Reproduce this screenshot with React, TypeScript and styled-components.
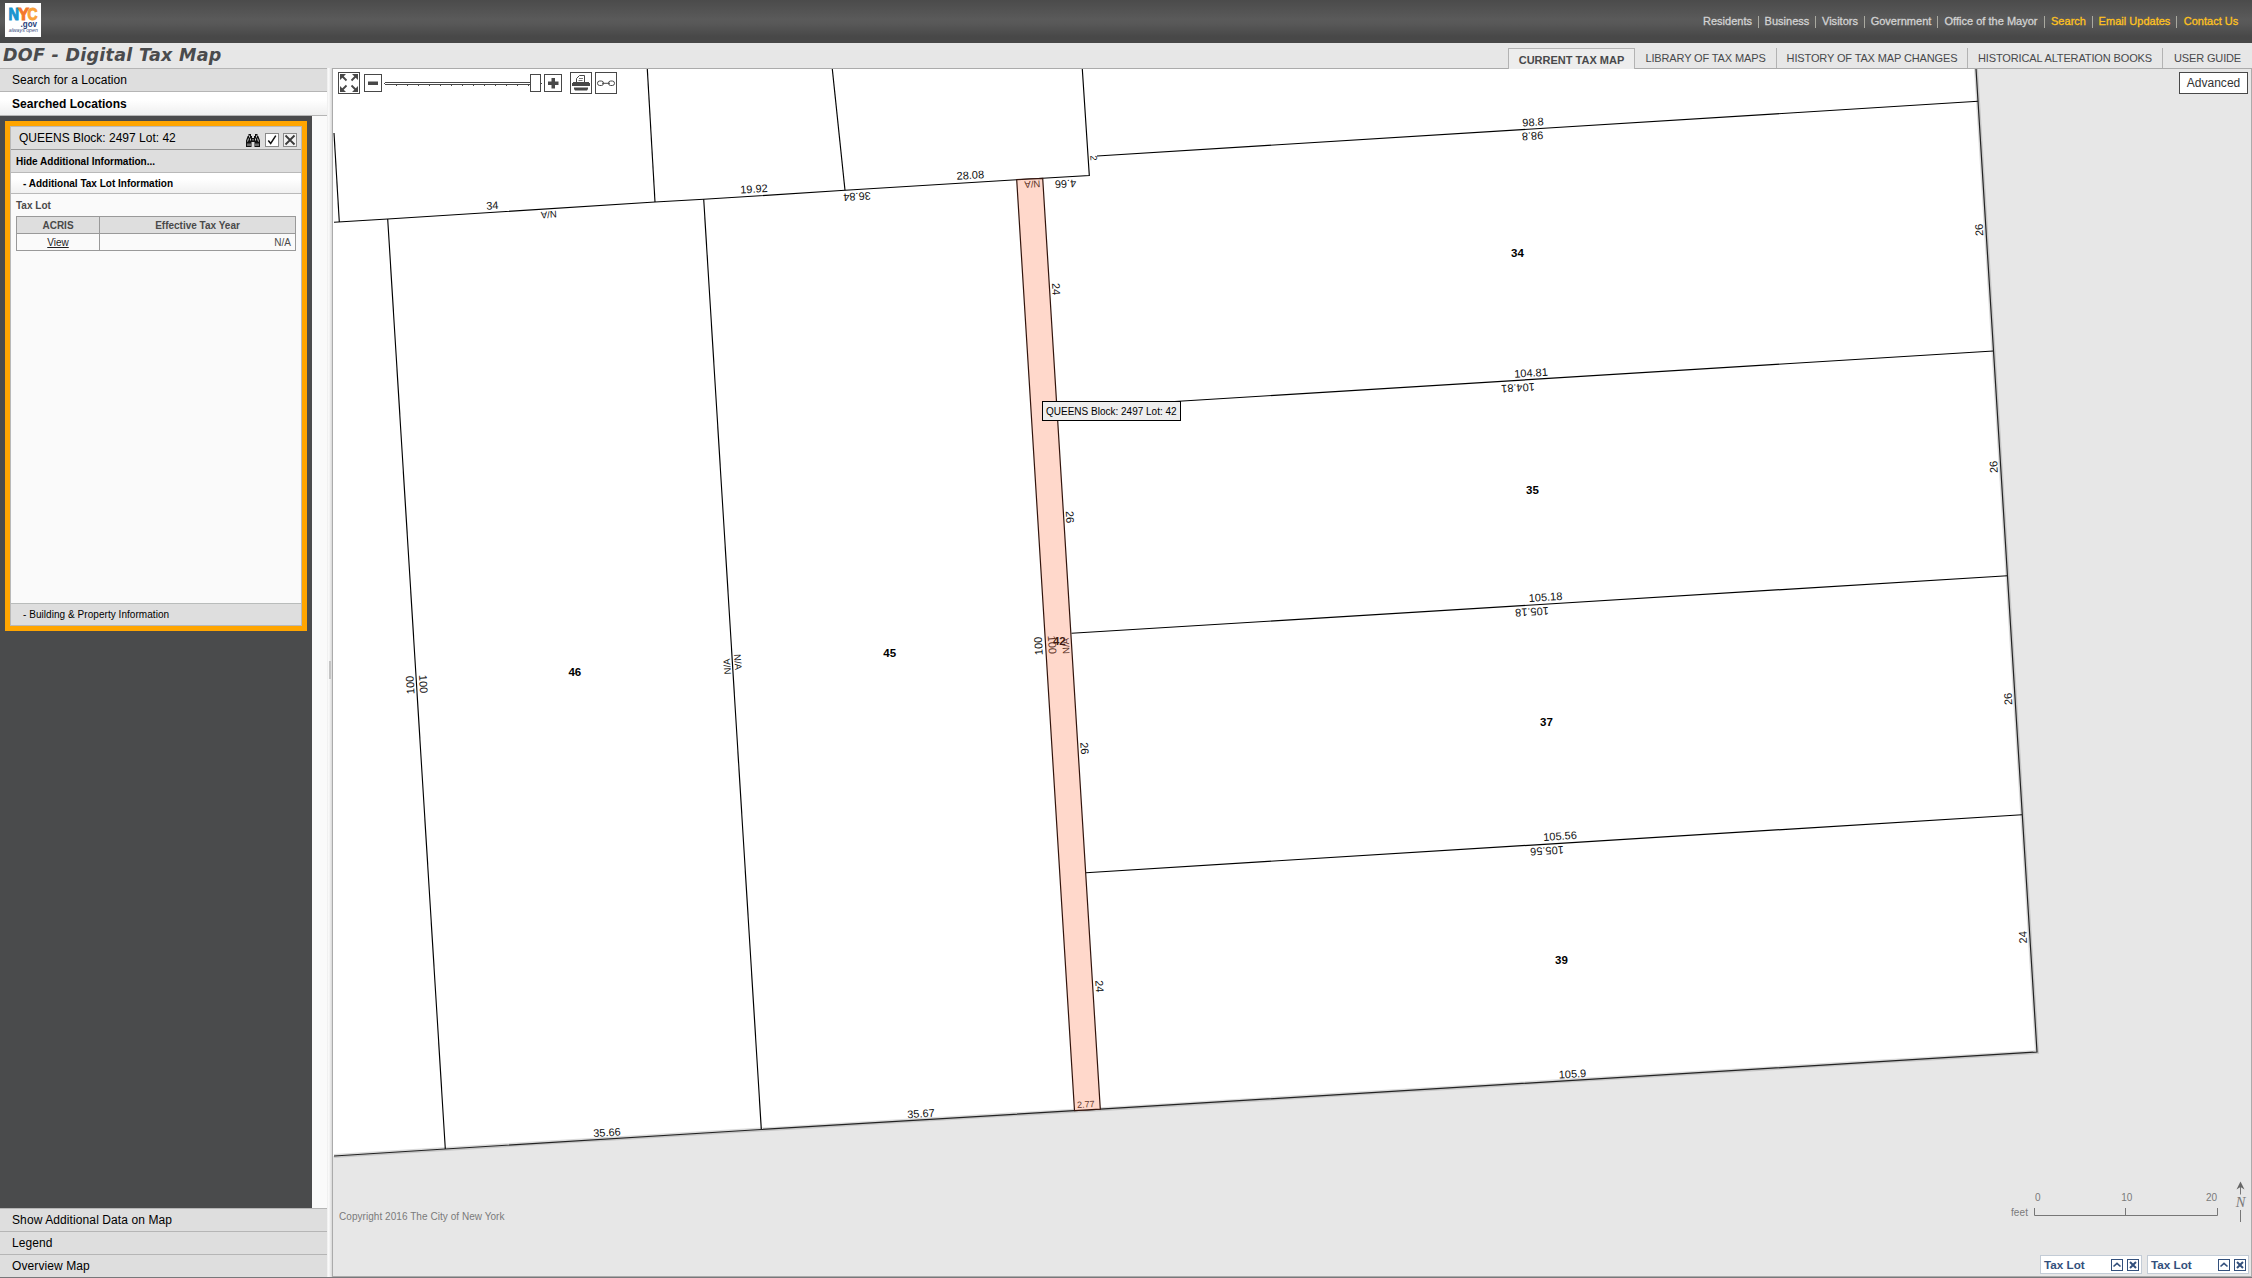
import React from "react";
import styled, { createGlobalStyle, css } from "styled-components";

const Global = createGlobalStyle`
  *, *::before, *::after { box-sizing: border-box; }
  html, body { margin: 0; padding: 0; overflow: hidden; background: #e7e7e7; }
  body { font-family: "Liberation Sans", Arial, Helvetica, sans-serif; }
`;

const Page = styled.div`
  width: 2252px;
  height: 1278px;
  display: flex;
  flex-direction: column;
  background: #e7e7e7;
  border-bottom: 1px solid #77777a;
`;

/* ---------- top banner ---------- */
const Banner = styled.header`
  height: 43px;
  flex: none;
  display: flex;
  justify-content: space-between;
  align-items: flex-start;
  padding: 3px 7px 0 5px;
  background: linear-gradient(#4b4b4b 0%, #5a5a5a 45%, #585858 55%, #484848 85%, #484848 100%);
`;

const BannerNav = styled.nav`
  display: flex;
  align-items: center;
  height: 37px;
`;

const NavLink = styled.a<{ $w: number; $hot?: boolean }>`
  width: ${(p) => p.$w}px;
  height: 12px;
  display: flex;
  align-items: center;
  justify-content: center;
  white-space: nowrap;
  font-size: 11px;
  line-height: 10px;
  padding-bottom: 1px;
  letter-spacing: 0.02px;
  color: ${(p) => (p.$hot ? "#ffc220" : "#d2d2d2")};
  -webkit-text-stroke: 0.3px currentColor;
  & + & { border-left: 1px solid #a9a9a0; }
`;

/* ---------- title and tabs ---------- */
const TitleBar = styled.div`
  height: 25px;
  flex: none;
  display: flex;
  justify-content: space-between;
  align-items: flex-start;
  background: #e7e7e7;
`;

const Title = styled.h1`
  margin: 0;
  padding-left: 3px;
  font: italic bold 17.5px/25px "DejaVu Sans", Verdana, sans-serif;
  letter-spacing: 0.27px;
  color: #4a4b4d;
  white-space: nowrap;
`;

const Tabs = styled.div`
  display: flex;
  padding-top: 5px;
`;

const Tab = styled.div<{ $w: number; $active?: boolean; $last?: boolean }>`
  width: ${(p) => p.$w}px;
  height: 20px;
  display: flex;
  align-items: center;
  justify-content: center;
  white-space: nowrap;
  font-size: 11px;
  letter-spacing: -0.13px;
  color: #48494b;
  border-right: ${(p) => (p.$last ? "none" : "1px solid #b3b3b3")};
  ${(p) =>
    p.$active &&
    css`
      height: 21px;
      position: relative;
      z-index: 1;
      padding-top: 1px;
      letter-spacing: 0;
      font-weight: bold;
      background: #ededed;
      border: 1px solid #b3b3b3;
      border-bottom: none;
    `}
`;

/* ---------- main split ---------- */
const Main = styled.div`
  flex: 1;
  min-height: 0;
  display: flex;
`;

const Sidebar = styled.aside`
  width: 327px;
  flex: none;
  display: flex;
  flex-direction: column;
  border-top: 1px solid #b5b5b5;
`;

const SideRow = styled.div<{ $open?: boolean; $h: number }>`
  height: ${(p) => p.$h}px;
  flex: none;
  display: flex;
  align-items: center;
  padding-left: 12px;
  font-size: 12px;
  letter-spacing: 0.04px;
  color: #000;
  font-weight: ${(p) => (p.$open ? "bold" : "normal")};
  background: ${(p) => (p.$open ? "linear-gradient(#ffffff 35%, #efefef)" : "#dedede")};
  border-bottom: 1px solid #b5b5b5;
`;

const BottomRow = styled(SideRow)`
  border-bottom: none;
  border-top: 1px solid #b5b5b5;
  letter-spacing: 0.1px;
`;

const SideBody = styled.div`
  flex: 1;
  min-height: 0;
  display: flex;
  background: #fafafa;
`;

const Dark = styled.div`
  width: 312px;
  padding: 5px;
  background: #4a4b4c;
`;

const Card = styled.section`
  width: 302px;
  height: 510px;
  border: 5px solid #ffa500;
  display: flex;
`;

const CardInner = styled.div`
  flex: 1;
  display: flex;
  flex-direction: column;
  border: 1px solid #b9b9b9;
  background: #fafafa;
`;

const CardHead = styled.div`
  height: 23px;
  flex: none;
  display: flex;
  align-items: center;
  padding: 0 4px 0 8px;
  gap: 4px;
  background: #dedede;
  border-bottom: 1px solid #999;
  font-size: 12px;
  svg { display: block; margin-top: 4px; }
  span { flex: 1; padding-bottom: 1px; }
`;

const CardBar = styled.div<{ $h: number; $pad: number; $bold?: boolean; $light?: boolean }>`
  height: ${(p) => p.$h}px;
  flex: none;
  display: flex;
  align-items: center;
  padding-left: ${(p) => p.$pad}px;
  font-size: 10px;
  white-space: pre;
  font-weight: ${(p) => (p.$bold ? "bold" : "normal")};
  background: ${(p) => (p.$light ? "linear-gradient(#ffffff 30%, #f0f0f0)" : "#dedede")};
  border-bottom: 1px solid #b9b9b9;
`;

const CardFoot = styled(CardBar)`
  border-bottom: none;
  border-top: 1px solid #b9bcbb;
  letter-spacing: 0.05px;
`;

const CardBody = styled.div`
  flex: 1;
  padding: 6px 5px 0;
  font-size: 10px;
  color: #4a4a4a;
`;

const Caption = styled.div`
  height: 16px;
  line-height: 12px;
  font-weight: bold;
`;

const Table = styled.div`
  display: grid;
  grid-template-columns: 82px 1fr;
  grid-auto-rows: 16px;
  gap: 1px;
  padding: 1px;
  width: 280px;
  background: #999;
`;

const Cell = styled.div<{ $head?: boolean; $right?: boolean }>`
  display: flex;
  align-items: center;
  justify-content: ${(p) => (p.$right ? "flex-end" : "center")};
  padding: 1px ${(p) => (p.$right ? 4 : 0)}px 0 0;
  background: ${(p) => (p.$head ? "#dedede" : "#fafafa")};
  font-weight: ${(p) => (p.$head ? "bold" : "normal")};
`;

const Link = styled.a`
  color: #222;
  text-decoration: underline;
`;

const Splitter = styled.div`
  width: 5px;
  flex: none;
  display: flex;
  align-items: center;
  justify-content: center;
  padding-bottom: 5px;
  background: linear-gradient(90deg, #ececec, #fbfbfb 35%, #d8d8d8);
  &::after {
    content: "";
    width: 2px;
    height: 18px;
    border: 1px solid #c4c4c4;
  }
`;

/* ---------- map ---------- */
const MapPane = styled.main`
  flex: 1;
  position: relative;
  overflow: hidden;
  background: #e7e7e7;
  border: 1px solid #ababab;
`;

const MapSvg = styled.svg`
  display: block;
`;

const Toolbar = styled.div`
  position: absolute;
  left: 5px;
  top: 3px;
  height: 22px;
  display: flex;
  align-items: center;
`;

const ToolButton = styled.button<{ $s: number; $ml?: number }>`
  width: ${(p) => p.$s}px;
  height: ${(p) => p.$s}px;
  margin: 0 0 0 ${(p) => p.$ml || 0}px;
  padding: 0;
  display: flex;
  align-items: center;
  justify-content: center;
  border: 1px solid #484848;
  background: #fff;
  svg { display: block; }
`;

const Advanced = styled.button`
  position: absolute;
  right: 3px;
  top: 3px;
  width: 69px;
  height: 22px;
  padding: 0;
  font: 12px "Liberation Sans", Arial, sans-serif;
  letter-spacing: 0.04px;
  color: #333;
  background: #fff;
  border: 1px solid #484848;
`;

const Tooltip = styled.div`
  position: absolute;
  left: 709px;
  top: 332px;
  width: 139px;
  height: 20px;
  padding-left: 3px;
  font-size: 10px;
  line-height: 19px;
  color: #000;
  white-space: nowrap;
  background: #eee;
  border: 1px solid #000;
`;

const Copyright = styled.div`
  position: absolute;
  left: 6px;
  bottom: 53px;
  font-size: 10px;
  line-height: 12px;
  letter-spacing: 0.05px;
  color: #7a7a7a;
`;

const ScaleBox = styled.svg`
  position: absolute;
  right: 0;
  bottom: 46px;
`;

const Dock = styled.div`
  position: absolute;
  right: 2px;
  bottom: 2px;
  display: flex;
  gap: 5px;
`;

const DockItem = styled.div`
  width: 102px;
  height: 19px;
  display: flex;
  align-items: center;
  gap: 4px;
  padding: 0 2px 0 3px;
  background: #fff;
  border: 1px solid #c3ccd6;
  color: #33507c;
  font-size: 11.7px;
  font-weight: bold;
  span { flex: 1; }
  svg { display: block; margin-top: 1px; }
`;

type LabelDef = [string, number, number, number, number?, string?];

const UP = -93.5;
const DOWN = 86.5;
const FLIP = 176.5;
const FLAT = -3.5;
const BROWN = "#5e3428";

const labels: LabelDef[] = [
  ["34", 492.3, 205.3, FLAT],
  ["N/A", 548.7, 214.7, FLIP, 9.5],
  ["19.92", 754, 188.7, FLAT],
  ["36.84", 857, 196.7, FLIP],
  ["28.08", 970.3, 175, FLAT],
  ["N/A", 1032.3, 184.3, FLIP, 9.5, BROWN],
  ["4.66", 1065.5, 184, FLIP],
  ["98.8", 1533, 121.9, FLAT],
  ["98.8", 1532.5, 136.2, FLIP],
  ["104.81", 1531, 372.7, FLAT],
  ["104.81", 1518, 388, FLIP],
  ["105.18", 1545.5, 596.9, FLAT],
  ["105.18", 1532, 612, FLIP],
  ["105.56", 1560, 835.9, FLAT],
  ["105.56", 1547, 851, FLIP],
  ["105.9", 1572.5, 1073.8, FLAT],
  ["35.66", 607, 1132.3, FLAT],
  ["35.67", 921, 1113.4, FLAT],
  ["2.77", 1085.7, 1104.3, FLAT, 9, BROWN],
  ["26", 1979, 230, UP],
  ["26", 1993.5, 466.9, UP],
  ["26", 2008, 698.9, UP],
  ["24", 2022.7, 937.3, UP],
  ["24", 1056.3, 289, DOWN],
  ["26", 1070, 517, DOWN],
  ["26", 1084.7, 748.3, DOWN],
  ["24", 1099.7, 986.3, DOWN],
  ["100", 1038.3, 646, UP],
  ["100", 1052.3, 644.7, DOWN, 11, BROWN],
  ["N/A", 1065.7, 646, UP, 9.5, BROWN],
  ["100", 410, 685, UP],
  ["100", 423.5, 684, DOWN],
  ["N/A", 727, 666.5, UP, 9.5],
  ["N/A", 738, 662, DOWN, 9.5],
];

const lots: [string, number, number, string?][] = [
  ["34", 1517.5, 252.5],
  ["35", 1532.5, 489.7],
  ["37", 1546.5, 721.5],
  ["39", 1561.5, 959.5],
  ["46", 574.8, 671.8],
  ["45", 889.7, 652.6],
  ["42", 1059.3, 641.3, "#3f1a10"],
];

const lines = [
  "M334 133L339.3 222",
  "M334 222.3L387.7 219L655 202L703.7 199.3L845 190.3L1016.7 179.7L1089.3 175.5L1082.3 69",
  "M647.3 69L655 202",
  "M832.3 69L845 190.3",
  "M1097 156L1978 101.3",
  "M387.7 219L445.3 1149",
  "M703.7 199.3L761.3 1129.3",
  "M1057 408.7L1993.4 351",
  "M1071.5 633.3L2007.5 575.7",
  "M1086 872.7L2022 814.7",
];

const EDGE = "M334 1156L445 1149L761 1129.5L1074 1110.7L1100 1109.2L2037 1052L1976 69";

const ParcelMap = () => (
  <MapSvg width="1917" height="1207" viewBox="333 69 1917 1207">
    <path d="M333 69H1976L2037 1052L1100 1109.2L333 1156Z" fill="#fff" />
    <g fill="none" stroke="#000" strokeWidth="1.15">
      {lines.map((d) => (
        <path key={d} d={d} />
      ))}
    </g>
    <path d={EDGE} fill="none" stroke="#000" strokeOpacity=".14" strokeWidth="4" />
    <path d={EDGE} fill="none" stroke="#222" strokeWidth="1.2" />
    <path d="M1016.7 179.7L1042.7 178.3L1100.3 1109.2L1074.5 1110.7Z" fill="#ffd8cb" stroke="#32140c" strokeWidth="1.2" />
    <g fontFamily="Liberation Sans, Arial, sans-serif" textAnchor="middle">
      {labels.map(([t, x, y, a, s = 11, c = "#111"], i) => (
        <text key={i} transform={`translate(${x} ${y}) rotate(${a})`} y={s * 0.36} fontSize={s} fill={c}>
          {t}
        </text>
      ))}
      <text transform="translate(1093.8 157.8) rotate(86.5)" y="3.5" fontSize="9.5" fill="#111">2</text>
      {lots.map(([t, x, y, c]) => (
        <text key={t} x={x} y={y + 4} fontSize="11.5" fontWeight="bold" fill={c || "#000"}>
          {t}
        </text>
      ))}
    </g>
  </MapSvg>
);

const Logo = () => (
  <svg width="36" height="34" viewBox="0 0 36 34">
    <rect width="36" height="34" fill="#fff" />
    <g fontFamily="Liberation Sans, Arial, sans-serif" fontWeight="bold">
      <g fontSize="16" strokeWidth="1">
        <text x="3.5" y="16.5" fill="#1b95cf" stroke="#1b95cf" textLength="10.5" lengthAdjust="spacingAndGlyphs">N</text>
        <text x="22.5" y="16.5" fill="#f9a13a" stroke="#f9a13a" textLength="10" lengthAdjust="spacingAndGlyphs">C</text>
        <text x="13" y="16.5" fill="#f4772b" stroke="#f4772b" textLength="11" lengthAdjust="spacingAndGlyphs">Y</text>
      </g>
      <text x="15.5" y="23.500" fontSize="8.5" fill="#28407c" textLength="16.5" lengthAdjust="spacingAndGlyphs">.gov</text>
    </g>
    <text x="3.8" y="29" fontFamily="Liberation Sans, Arial, sans-serif" fontSize="5.3" fontStyle="italic" fill="#3c4f80" textLength="29" lengthAdjust="spacingAndGlyphs">always open</text>
  </svg>
);

const Binoculars = () => (
  <svg width="16" height="13" viewBox="0 0 16 13">
    <path d="M3.500 0H6v2h1v2h2V2h1V0h2.500v2h.8L15 6.500V13h-5.500V8h-3v5H1V6.500L2.700 2h.8z" fill="#111" />
    <path d="M4.500 1.500v2M11.500 1.500v2M3.500 4.500l-1 3M12.500 4.500l1 3M5.500 4.500v2M10.500 4.500v2M3 9.500v2.500M5 9.500v2.500M11 9.500v2.500M13 9.500v2.500M8 5v1.500" stroke="#dedede" strokeWidth=".9" />
  </svg>
);

const CheckBox = () => (
  <svg width="14" height="14" viewBox="0 0 14 14">
    <rect x=".5" y=".5" width="13" height="13" fill="#fff" stroke="#8a8a8a" />
    <path d="M3.3 7.5L5.7 10.5L10.8 2.7" fill="none" stroke="#111" strokeWidth="1.5" />
  </svg>
);

const CloseBox = () => (
  <svg width="14" height="14" viewBox="0 0 14 14">
    <rect x=".5" y=".5" width="13" height="13" fill="#f2f2f2" stroke="#8a8a8a" />
    <path d="M2.500 2.500l9 9M11.500 2.500l-9 9" stroke="#3a3a3a" strokeWidth="1.8" />
  </svg>
);

const FullExtent = () => (
  <svg width="20" height="20" viewBox="0 0 20 20">
    <path d="M1 1h6L1 7zM19 1v6l-6-6zM1 19v-6l6 6zM19 19h-6l6-6z" fill="#484848" />
    <path d="M3 3l4.5 4.5M17 3l-4.5 4.5M3 17l4.5-4.5M17 17l-4.5-4.5" stroke="#484848" strokeWidth="1.8" />
  </svg>
);

const Slider = () => (
  <svg width="162" height="22" viewBox="382 72 162 22">
    <path d="M385 82.5H531M385 84.5H531M384 83.5h1M541 83.5h1" stroke="#484848" />
    {Array.from({ length: 13 }, (_, i) => (
      <path key={i} d={`M${396.5 + i * 11} 85v1`} stroke="#484848" />
    ))}
    <rect x="530.5" y="74.5" width="10" height="17" fill="#fff" stroke="#484848" />
  </svg>
);

const Printer = () => (
  <svg width="20" height="20" viewBox="0 0 20 20">
    <path d="M5.500 9.500V5.500L8.500 2.500H13.500V9.500" fill="none" stroke="#484848" />
    <path d="M8 5.500h4M7.500 7.500h4" fill="none" stroke="#777" />
    <path d="M1 10h1V9h16v1h1v3H1zM3 14.500h14v1.500l-1 1.500H4L3 16z" fill="#484848" />
  </svg>
);

const ChainLink = () => (
  <svg width="20" height="20" viewBox="0 0 20 20" fill="none" stroke="#484848">
    <rect x="1.5" y="8" width="6" height="4.5" rx="2.2" />
    <rect x="12.5" y="8" width="6" height="4.5" rx="2.2" />
    <path d="M6 10.3h8" />
  </svg>
);

const ScaleBar = () => (
  <ScaleBox width="250" height="50" viewBox="2001 1180 250 50">
    <g fill="none" stroke="#777" strokeWidth="1">
      <path d="M2034.5 1208V1215.5H2217.5V1208M2125.5 1208V1215" />
      <path d="M2240.5 1183V1194.500M2240.5 1210V1222" />
    </g>
    <path d="M2240.5 1181.500L2244.500 1189.500L2240.500 1187L2236.500 1189.500Z" fill="#666" />
    <g fontFamily="Liberation Sans, Arial, sans-serif" fontSize="10" fill="#7a7a7a" textAnchor="middle">
      <text x="2037.7" y="1201">0</text>
      <text x="2126.7" y="1201">10</text>
      <text x="2211.5" y="1201">20</text>
      <text x="2019.5" y="1216" letterSpacing=".1">feet</text>
    </g>
    <text x="2240.5" y="1207" fontFamily="Liberation Serif, Times New Roman, serif" fontStyle="italic" fontSize="14.5" fill="#777" textAnchor="middle">N</text>
  </ScaleBox>
);

const DockButton = ({ close }: { close?: boolean }) => (
  <svg width="12" height="12" viewBox="0 0 12 12">
    <rect x=".5" y=".5" width="11" height="11" fill="#fff" stroke="#33507c" />
    <path d={close ? "M3 3l6 6M9 3l-6 6" : "M2.5 7.5L6 4.3L9.5 7.5"} fill="none" stroke="#33507c" strokeWidth={close ? 2 : 1.6} />
  </svg>
);

const nav: [string, number, boolean?][] = [
  ["Residents", 61],
  ["Business", 57],
  ["Visitors", 49],
  ["Government", 73],
  ["Office of the Mayor", 107],
  ["Search", 48, true],
  ["Email Updates", 84, true],
  ["Contact Us", 69, true],
];

const tabs: [string, number][] = [
  ["CURRENT TAX MAP", 127],
  ["LIBRARY OF TAX MAPS", 142],
  ["HISTORY OF TAX MAP CHANGES", 191],
  ["HISTORICAL ALTERATION BOOKS", 195],
  ["USER GUIDE", 89],
];

export default function App() {
  return (
    <Page>
      <Global />
      <Banner>
        <Logo />
        <BannerNav>
          {nav.map(([t, w, hot]) => (
            <NavLink key={t} $w={w} $hot={hot}>{t}</NavLink>
          ))}
        </BannerNav>
      </Banner>
      <TitleBar>
        <Title>DOF - Digital Tax Map</Title>
        <Tabs>
          {tabs.map(([t, w], i) => (
            <Tab key={t} $w={w} $active={i === 0} $last={i === tabs.length - 1}>{t}</Tab>
          ))}
        </Tabs>
      </TitleBar>
      <Main>
        <Sidebar>
          <SideRow $h={23}>Search for a Location</SideRow>
          <SideRow $h={24} $open>Searched Locations</SideRow>
          <SideBody>
            <Dark>
              <Card>
                <CardInner>
                  <CardHead>
                    <span>QUEENS Block: 2497 Lot: 42</span>
                    <Binoculars />
                    <CheckBox />
                    <CloseBox />
                  </CardHead>
                  <CardBar $h={23} $pad={5} $bold>Hide Additional Information...</CardBar>
                  <CardBar $h={21} $pad={12} $bold $light>- Additional Tax Lot Information</CardBar>
                  <CardBody>
                    <Caption>Tax Lot</Caption>
                    <Table>
                      <Cell $head>ACRIS</Cell>
                      <Cell $head>Effective Tax Year</Cell>
                      <Cell><Link>View</Link></Cell>
                      <Cell $right>N/A</Cell>
                    </Table>
                  </CardBody>
                  <CardFoot $h={22} $pad={12}>- Building &amp; Property Information</CardFoot>
                </CardInner>
              </Card>
            </Dark>
          </SideBody>
          <BottomRow $h={23}>Show Additional Data on Map</BottomRow>
          <BottomRow $h={23}>Legend</BottomRow>
          <BottomRow $h={23}>Overview Map</BottomRow>
        </Sidebar>
        <Splitter />
        <MapPane>
          <ParcelMap />
          <Toolbar>
            <ToolButton $s={22}><FullExtent /></ToolButton>
            <ToolButton $s={18} $ml={4}>
              <svg width="16" height="16"><path d="M3 6.5h10v3.5H3z" fill="#484848" /></svg>
            </ToolButton>
            <Slider />
            <ToolButton $s={18}>
              <svg width="16" height="16"><path d="M6.500 3h3.500v3.500h3.500v3.500H10v3.500H6.500V10H3V6.500h3.500z" fill="#484848" /></svg>
            </ToolButton>
            <ToolButton $s={22} $ml={8}><Printer /></ToolButton>
            <ToolButton $s={22} $ml={3}><ChainLink /></ToolButton>
          </Toolbar>
          <Advanced>Advanced</Advanced>
          <Tooltip>QUEENS Block: 2497 Lot: 42</Tooltip>
          <Copyright>Copyright 2016 The City of New York</Copyright>
          <ScaleBar />
          <Dock>
            <DockItem><span>Tax Lot</span><DockButton /><DockButton close /></DockItem>
            <DockItem><span>Tax Lot</span><DockButton /><DockButton close /></DockItem>
          </Dock>
        </MapPane>
      </Main>
    </Page>
  );
}
